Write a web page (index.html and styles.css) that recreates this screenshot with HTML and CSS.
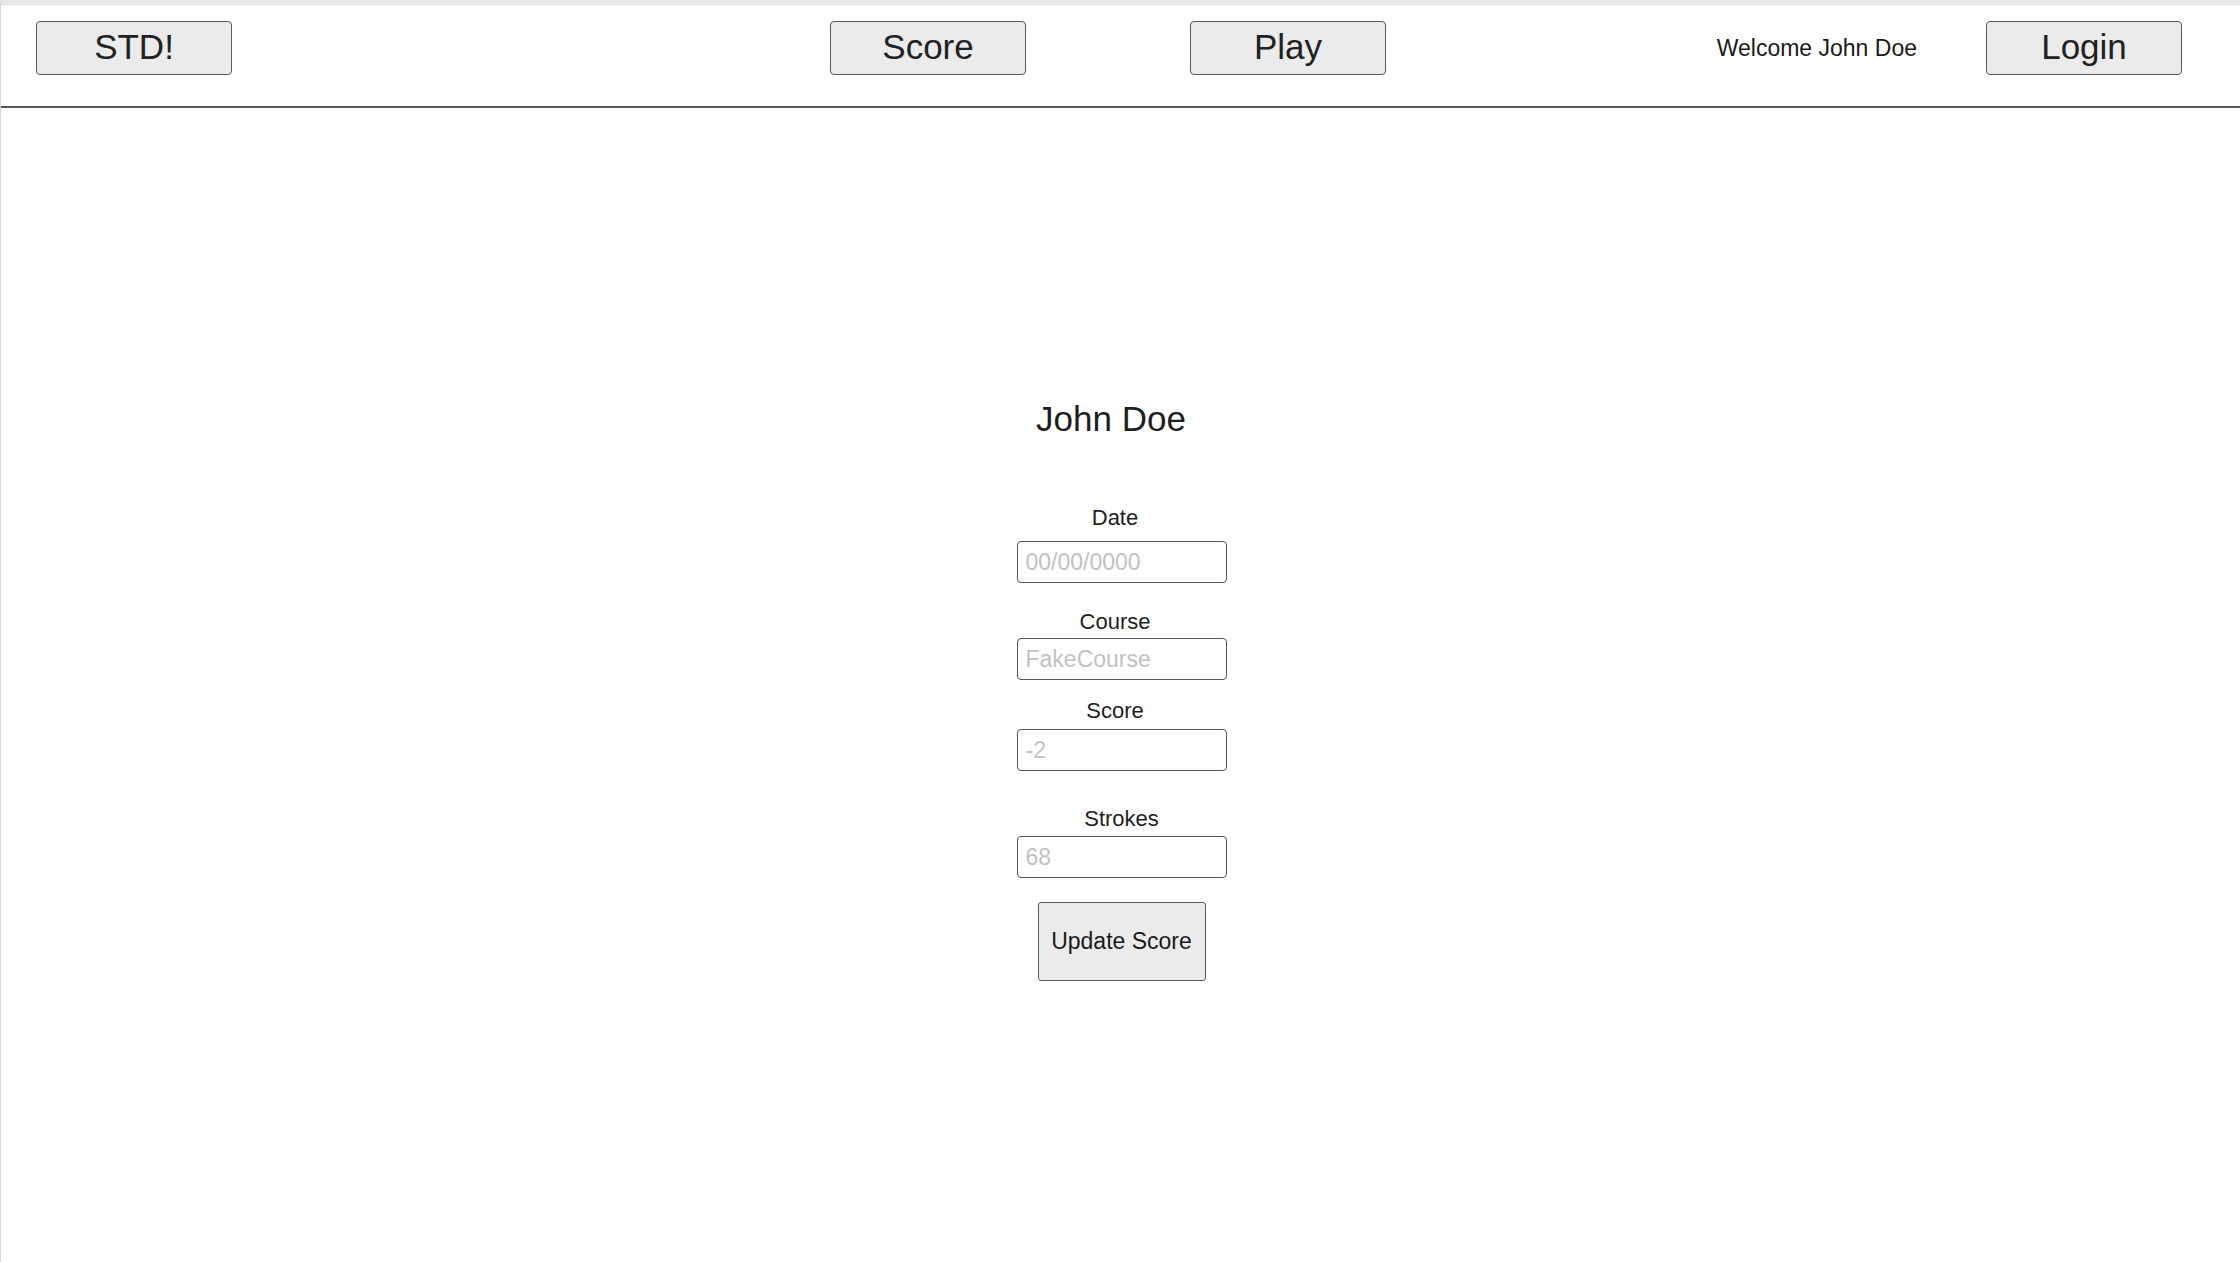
FILE: index.html
```html
<!DOCTYPE html>
<html lang="en">
<head>
<meta charset="utf-8">
<title>STD! - Update Score</title>
<link rel="stylesheet" href="styles.css">
</head>
<body>
<div class="page">
  <header class="topbar">
    <button class="nav-btn">STD!</button>
    <button class="nav-btn nav-score">Score</button>
    <button class="nav-btn nav-play">Play</button>
    <div class="user-area">
      <span class="welcome">Welcome John Doe</span>
      <button class="nav-btn">Login</button>
    </div>
  </header>
  <main class="content">
    <h1 class="player-name">John Doe</h1>
    <form class="score-form">
      <label class="field-label label-date" for="date">Date</label>
      <input class="field-input input-date" id="date" type="text" placeholder="00/00/0000">
      <label class="field-label label-course" for="course">Course</label>
      <input class="field-input input-course" id="course" type="text" placeholder="FakeCourse">
      <label class="field-label label-score" for="score">Score</label>
      <input class="field-input input-score" id="score" type="text" placeholder="-2">
      <label class="field-label label-strokes" for="strokes">Strokes</label>
      <input class="field-input input-strokes" id="strokes" type="text" placeholder="68">
      <button type="button" class="update-btn">Update Score</button>
    </form>
  </main>
</div>
</body>
</html>
```

FILE: styles.css
```css
html, body {
  margin: 0;
  padding: 0;
  background: #ffffff;
}

body {
  font-family: "Liberation Sans", Arial, Helvetica, sans-serif;
  color: #222222;
}

.page {
  min-height: 1262px;
  box-sizing: border-box;
  border-top: 4px solid #e9e9e9;
  border-left: 1px solid #d6d6d6;
  box-shadow: inset 0 1px 0 #dcdcdc;
}

.topbar {
  display: flex;
  align-items: flex-start;
  height: 104px;
  box-sizing: border-box;
  padding: 17px 58px 0 35px;
  border-bottom: 2px solid #555555;
}

.nav-btn {
  width: 196px;
  height: 54px;
  box-sizing: border-box;
  background: #ebebeb;
  border: 1px solid #5a5a5a;
  border-radius: 4px;
  font-family: "Liberation Sans", Arial, Helvetica, sans-serif;
  font-size: 35px;
  color: #222222;
  padding: 0 0 2px;
  line-height: 50px;
}

.nav-score {
  margin-left: 598px;
}

.nav-play {
  margin-left: 164px;
}

.user-area {
  margin-left: auto;
  display: flex;
  align-items: center;
  height: 54px;
  gap: 69px;
}

.welcome {
  font-size: 23px;
  color: #1a1a1a;
}

.content {
  display: flex;
  flex-direction: column;
  align-items: center;
  padding: 291px 0 0 2px;
}

.player-name {
  margin: 0 21px 0 0;
  font-size: 35px;
  line-height: 40px;
  font-weight: normal;
  color: #1e1e1e;
}

.score-form {
  display: flex;
  flex-direction: column;
  align-items: center;
}

.field-label {
  font-size: 22px;
  line-height: 26px;
  color: #1e1e1e;
  margin-right: 13px;
}

.label-date { margin-top: 66px; }
.label-course { margin-top: 26px; }
.label-score { margin-top: 18px; }
.label-strokes { margin-top: 35px; margin-right: 0; }

.field-input {
  width: 210px;
  height: 42px;
  box-sizing: border-box;
  border: 1px solid #555555;
  border-radius: 4px;
  padding: 0 8px;
  font-family: "Liberation Sans", Arial, Helvetica, sans-serif;
  font-size: 23px;
  color: #222222;
  background: #ffffff;
}

.field-input::placeholder {
  color: #c2c2c2;
}

.input-date { margin-top: 10px; }
.input-course { margin-top: 3px; }
.input-score { margin-top: 5px; }
.input-strokes { margin-top: 4px; }

.update-btn {
  margin-top: 24px;
  width: 168px;
  height: 79px;
  box-sizing: border-box;
  background: #ebebeb;
  border: 1px solid #5a5a5a;
  border-radius: 3px;
  font-family: "Liberation Sans", Arial, Helvetica, sans-serif;
  font-size: 23px;
  color: #1a1a1a;
  padding: 0;
}
```
